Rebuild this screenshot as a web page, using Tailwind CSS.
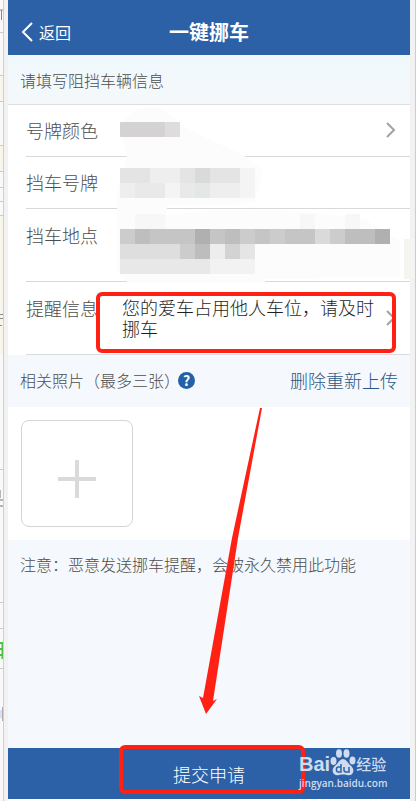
<!DOCTYPE html>
<html lang="zh-CN">
<head>
<meta charset="utf-8">
<meta name="viewport" content="width=device-width, initial-scale=1">
<title>一键挪车</title>
<script src="https://cdn.jsdelivr.net/npm/@tailwindcss/browser@4"></script>
</head>
<body class="flex min-h-screen bg-[#f2f2f2] font-['Noto_Sans_CJK_SC',sans-serif] font-light text-[#4d4d4d]">
  <!-- sliver of the page behind, left side -->
  <div class="relative w-1 shrink-0 overflow-hidden border-r border-[#cfcfcf] bg-[#f9f9f9]" aria-hidden="true">
    <svg class="absolute top-0 left-0" width="3" height="801">
      <rect y="76" width="3" height="25" fill="#f8f5ea"/>
      <rect y="145" width="3" height="27" fill="#f8f5ea"/>
      <rect y="216" width="3" height="138" fill="#f8f5ea"/>
      <path d="M0 32.500h3M0 75.500h3M0 101.500h3M0 145.500h3M0 171.500h3M0 187.500h3M0 201.500h3M0 215.500h3M0 469.500h3M0 602.500h3M0 628.500h3M0 668.500h3" stroke="#c9c9c9"/>
      <path d="M0 10h3M1.500 10v10M0 314.500h3M0 318.500h3M0 325.500h2" stroke="#8a8a8a"/>
      <path d="M0 490v8M0 500h3M0 506h3" stroke="#b5b5b5" stroke-width="2"/>
      <path d="M0 643h3M0 649h3M0 655h3M2.500 642v17" stroke="#4fbf45" stroke-width="2"/>
      <rect y="710" width="2" height="8" fill="#cfe4fa"/>
      <path d="M2.500 707v14" stroke="#b5a9a9"/>
    </svg>
  </div>

  <main class="relative mr-[5px] ml-1 flex min-w-0 flex-1 flex-col bg-[#f5f8fc]">
    <header class="relative flex h-[55px] items-center justify-center bg-[#2c61a8] pt-2 text-white">
      <a href="#" class="absolute left-3 flex items-center gap-1.5 text-base leading-6 font-normal">
        <svg width="13" height="20" viewBox="0 0 13 20" fill="none" stroke="currentColor" stroke-width="2"><path d="M12 1 3 10l9 9"/></svg>
        返回
      </a>
      <h1 class="text-xl leading-6 font-bold">一键挪车</h1>
    </header>

    <form class="flex flex-1 flex-col">
      <h2 class="flex h-[50px] items-center border-b border-[#dcdfe0] bg-linear-to-b from-[#eff9fd] to-[#f5f8fb] px-3 text-base">请填写阻挡车辆信息</h2>

      <div class="relative bg-white pl-[18px] text-lg leading-6">
        <!-- faint smudge around the masked values -->
        <svg class="absolute top-0 left-[107px]" width="290" height="180" fill="#fcfcfc" aria-hidden="true">
          <path d="M5 20Q20-2 45 3L75 25 128 50 148 65 140 96 120 100H52V110L100 105Q180 102 250 115L285 135V172L150 174V178H13L2 165V88L12 52z"/>
        </svg>
        <div class="flex h-[52px] items-center border-b border-[#d9d9d9] pb-0.5">
          <span class="w-[94px]">号牌颜色</span>
          <svg class="relative" width="60" height="15" role="img" aria-label="已打码" shape-rendering="crispEdges"><rect width="60" height="15" fill="#d4d2d3"/><rect x="45" width="15" height="15" fill="#dedcdd"/></svg>
          <svg class="relative mr-3.5 ml-auto" width="12" height="16" viewBox="0 0 12 16" fill="none" stroke="#a3a1a2" stroke-width="2"><path d="M3 1l7 7-7 7"/></svg>
        </div>
        <div class="flex h-[52px] items-center border-b border-[#d9d9d9] pb-0.5">
          <span class="w-[94px]">挡车号牌</span>
          <svg class="relative mt-0.5" width="135" height="30" role="img" aria-label="已打码" shape-rendering="crispEdges">
            <rect width="135" height="30" fill="#eeeeee"/>
            <path fill="#e4e4e4" d="M0 0h30v15H0zM60 0h15v15H60zM90 0h30v15H90z"/>
            <path fill="#d8dbda" d="M75 0h15v15H75z"/>
            <path fill="#e3e7e6" d="M75 15h15v15H75z"/>
            <path fill="#e9e9e9" d="M15 15h30v15H15zM60 15h15v15H60z"/>
            <path fill="#f4f4f4" d="M45 15h15v15H45zM120 0h15v30h-15z"/>
          </svg>
        </div>
        <div class="flex h-[73px] border-b border-[#d9d9d9]">
          <span class="w-[94px] pt-3.5">挡车地点</span>
          <svg class="relative mt-[5px]" width="270" height="60" role="img" aria-label="已打码" shape-rendering="crispEdges">
            <path fill="#f7f7f7" d="M15 0h30v15H15zM180 0h15v15h-15zM225 0h15v15h-15z"/>
            <rect y="15" width="270" height="15" fill="#c5c5c5"/>
            <path fill="#bebebe" d="M15 15h15v15H15zM105 15h15v15h-15zM225 15h30v15h-30z"/>
            <path fill="#b0b0b0" d="M75 15h15v15H75zM255 15h15v15h-15z"/>
            <path fill="#cccccc" d="M0 15h15v15H0zM120 15h15v15h-15zM150 15h15v15h-15zM210 15h15v15h-15z"/>
            <path fill="#dadada" d="M195 15h15v15h-15z"/>
            <rect y="30" width="60" height="15" fill="#dedede"/>
            <rect x="60" y="30" width="15" height="15" fill="#cccccc"/>
            <rect x="75" y="30" width="15" height="15" fill="#bdbdbd"/>
            <rect x="90" y="30" width="15" height="15" fill="#ededed"/>
            <rect x="105" y="30" width="15" height="15" fill="#d3d3d3"/>
            <rect x="120" y="30" width="15" height="15" fill="#e5e5e5"/>
            <rect y="45" width="90" height="15" fill="#e8e8e8"/>
            <rect x="90" y="45" width="45" height="15" fill="#f2f2f2"/>
          </svg>
        </div>
        <div class="relative flex h-[73px] border-b border-[#d9dde2]">
          <label for="message" class="w-24 shrink-0 pt-3.5">提醒信息</label>
          <textarea id="message" rows="2" class="mt-[15px] h-[42px] w-[256px] resize-none overflow-hidden leading-[21px] text-[#1f1f1f] outline-none">您的爱车占用他人车位，请及时挪车</textarea>
          <svg class="absolute top-7 right-3.5" width="12" height="16" viewBox="0 0 12 16" fill="none" stroke="#a3a1a2" stroke-width="2"><path d="M3 1l7 7-7 7"/></svg>
          <div class="pointer-events-none absolute top-2.5 right-3.5 bottom-px left-[70px] rounded-md border-4 border-[#ff2114]"></div>
        </div>
        <!-- edge patch beside the address row -->
        <div class="absolute top-[134px] -right-1 h-10 w-2.5 bg-[#f4f4f1]"></div>
      </div>

      <div class="flex h-[52px] items-center px-3 pb-0.5">
        <h2 class="text-base">相关照片（最多三张）</h2>
        <button type="button" aria-label="帮助" class="-ml-0.5 size-[17px] rounded-full bg-[#2360a8] text-sm leading-[17px] font-bold text-white">?</button>
        <button type="button" class="ml-auto text-lg leading-6 text-[#2a5788]">删除重新上传</button>
      </div>

      <div class="bg-white px-[13px] py-[13px]">
        <button type="button" aria-label="添加照片" class="flex h-[107px] w-28 items-center justify-center rounded-lg border border-[#d6d4d6] pt-2.5">
          <svg width="38" height="38" viewBox="0 0 38 38" stroke="#dbd9db" stroke-width="4"><path d="M19 0v38M0 19h38"/></svg>
        </button>
      </div>

      <p class="flex-1 px-3 pt-3 text-base whitespace-nowrap">注意：恶意发送挪车提醒，会被永久禁用此功能</p>

      <div class="relative border-b-2 border-white">
        <button type="submit" class="block h-[51px] w-full bg-[#2c61a8] text-lg text-white">提交申请</button>
        <div class="pointer-events-none absolute -top-[3px] left-[111px] h-[49px] w-[186px] rounded-md border-4 border-[#ff2114]"></div>
        <div class="pointer-events-none absolute top-0 right-[21px] flex w-[90px] flex-col font-['Open_Sans','Noto_Sans_CJK_SC',sans-serif] font-normal text-[#cfdcee]">
          <div class="flex h-7 items-end">
            <span class="font-['Liberation_Sans'] text-xl leading-6 font-bold">Bai</span>
            <svg class="shrink-0" width="26" height="28" viewBox="0 0 26 28" fill="currentColor">
              <ellipse cx="3.500" cy="13" rx="3" ry="4"/><ellipse cx="9" cy="5.500" rx="3" ry="4.200"/><ellipse cx="16.500" cy="5.500" rx="3" ry="4.200"/><ellipse cx="22.500" cy="12.500" rx="3" ry="4"/>
              <path d="M13 11c3 0 4 3 7 6 3 2.500 4 4.500 3 7.500-1 3-4 3-6 2.500-3-.6-5-.6-8 0-2.500.5-5 .2-6-2.500-1-3 0-5 3-7.500 3-3 4-6 7-6z"/>
              <path d="M11 16v8H8.500a2 2 0 0 1-2-2v-1a2 2 0 0 1 2-2H11M14 19v3a2 2 0 0 0 2 2h3v-5" fill="none" stroke="#2c61a8" stroke-width="1.500"/>
            </svg>
            <span class="text-[15px] leading-6 font-medium whitespace-nowrap">经验</span>
          </div>
          <span class="text-[10px] leading-[14px] font-semibold">jingyan.baidu.com</span>
        </div>
      </div>
    </form>

    <svg class="pointer-events-none absolute top-[408px] left-[182px]" width="80" height="307" viewBox="0 0 80 307" fill="#ff2114" aria-hidden="true">
      <path d="M70 0h2L48 130 23 293l4-2-11 15L9 288l4 2 29-160z"/>
    </svg>
  </main>
  <div class="w-px shrink-0 bg-[#cccccc]"></div>
</body>
</html>
